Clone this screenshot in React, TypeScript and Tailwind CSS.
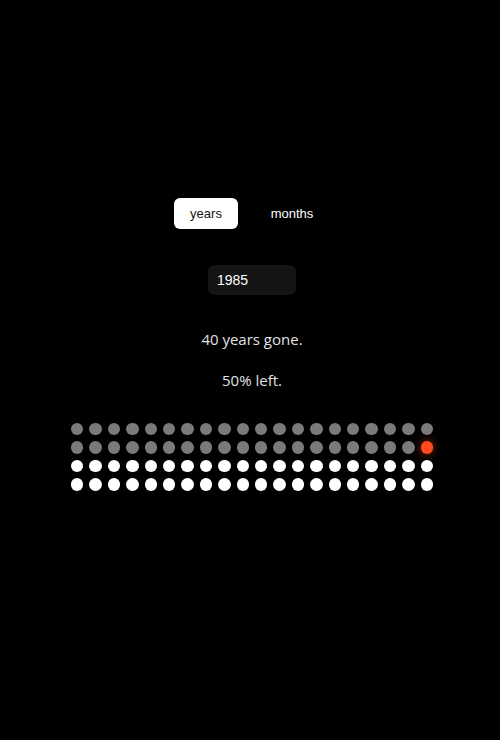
import { useState } from 'react';

export default function App() {
    const [mode, setMode] = useState<'years' | 'months'>('years');
    const [year, setYear] = useState('1985');
    const total = 80;
    const gone = 40;

    return (
        <div className="min-h-[740px] w-full bg-black flex flex-col items-center pl-1 pt-[198px]" style={{ fontFamily: '"Liberation Sans", Arial, sans-serif' }}>
            {/* unit toggle */}
            <div className="mr-[6px] flex items-center gap-[22px]">
                <button
                    onClick={() => setMode('years')}
                    className={`h-[31px] w-16 rounded-md text-[13px] font-medium ${mode === 'years' ? 'bg-white text-[#111]' : 'bg-transparent text-white'}`}
                >
                    years
                </button>
                <button
                    onClick={() => setMode('months')}
                    className={`h-[31px] w-16 rounded-md text-[13px] font-medium ${mode === 'months' ? 'bg-white text-[#111]' : 'bg-transparent text-white'}`}
                >
                    months
                </button>
            </div>

            {/* birth year */}
            <input
                value={year}
                onChange={e => setYear(e.target.value)}
                className="mt-9 h-[30px] w-[88px] rounded-md bg-[#141414] px-[9px] text-[14px] text-white outline-none"
            />

            <div className="mt-[34px] flex flex-col items-center gap-[21px] text-[15px] text-[#e2e2e2]" style={{ fontFamily: '"Open Sans", "Noto Sans", sans-serif' }}>
                <p className="leading-5">40 years gone.</p>
                <p className="leading-5">50% left.</p>
            </div>

            {/* dots */}
            <div className="mt-[33px] grid w-[362px] grid-cols-20 gap-x-[6px] gap-y-[6px]">
                {Array.from({ length: total }).map((_, i) => (
                    <div
                        key={i}
                        className={`aspect-square rounded-full ${i < gone - 1 ? 'bg-[#7a7a7a]' : i === gone - 1 ? 'bg-[#ff4b1f] shadow-[0_0_8px_rgba(255,75,31,0.6)]' : 'bg-white'}`}
                    />
                ))}
            </div>
        </div>
    );
}
